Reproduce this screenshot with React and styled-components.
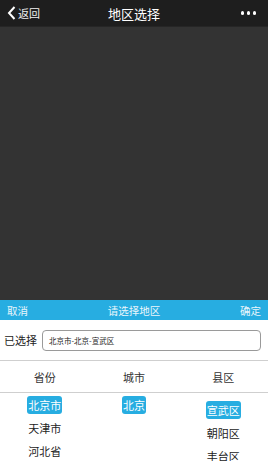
import React from "react";
import styled, { createGlobalStyle } from "styled-components";

const GlobalStyle = createGlobalStyle`
  html, body {
    margin: 0;
    padding: 0;
    background: #333;
  }
  body {
    font-family: "Noto Sans CJK SC", "Noto Sans", sans-serif;
  }
`;

const provinces = ["北京市", "天津市", "河北省"];
const cities = ["北京"];
const counties = ["宣武区", "朝阳区", "丰台区"];

const App = () => {
  return (
    <Page>
      <GlobalStyle />
      <NavBar>
        <Back>
          <svg width="9" height="14" viewBox="0 0 9 14">
            <path d="M7.5 1 L2 7 L7.5 13" fill="none" stroke="#fff" strokeWidth="2" />
          </svg>
          <span>返回</span>
        </Back>
        <Title>地区选择</Title>
        <More>
          <i />
          <i />
          <i />
        </More>
      </NavBar>
      <Mask />
      <Panel>
        <Toolbar>
          <span>取消</span>
          <span>请选择地区</span>
          <span>确定</span>
        </Toolbar>
        <SelectedRow>
          <Label>已选择</Label>
          <Field>北京市-北京-宣武区</Field>
        </SelectedRow>
        <HeadRow>
          <span>省份</span>
          <span>城市</span>
          <span>县区</span>
        </HeadRow>
        <Wheels>
          <Wheel>
            {provinces.map((p, i) => (
              <Item key={p} $active={i === 0}>
                <span>{p}</span>
              </Item>
            ))}
          </Wheel>
          <Wheel>
            {cities.map((c, i) => (
              <Item key={c} $active={i === 0}>
                <span>{c}</span>
              </Item>
            ))}
          </Wheel>
          <Wheel $offset={5}>
            {counties.map((c, i) => (
              <Item key={c} $active={i === 0}>
                <span>{c}</span>
              </Item>
            ))}
          </Wheel>
        </Wheels>
      </Panel>
    </Page>
  );
};

const Page = styled.div`
  width: 268px;
  height: 461px;
  display: flex;
  flex-direction: column;
  overflow: hidden;
`;

const NavBar = styled.div`
  height: 26px;
  background: #1e1e1e;
  display: flex;
  align-items: center;
  justify-content: space-between;
  padding: 0 12px 0 7px;
  position: relative;
  color: #fff;
  border-bottom: 1px solid #262626;
`;

const Back = styled.div`
  display: flex;
  align-items: center;
  gap: 2px;
  font-size: 11px;
  color: #f0f0f0;
`;

const Title = styled.div`
  position: absolute;
  left: 0;
  right: 0;
  text-align: center;
  font-size: 13px;
  pointer-events: none;
`;

const More = styled.div`
  display: flex;
  gap: 2.5px;
  i {
    width: 3.5px;
    height: 3.5px;
    border-radius: 50%;
    background: #fff;
  }
`;

const Mask = styled.div`
  flex: 1;
  background: #333333;
`;

const Panel = styled.div`
  background: #fff;
  height: 161px;
  display: flex;
  flex-direction: column;
`;

const Toolbar = styled.div`
  height: 20px;
  background: #27ade1;
  display: flex;
  align-items: center;
  justify-content: space-between;
  padding: 0 7px;
  font-size: 10.5px;
  color: #eaf6fc;
`;

const SelectedRow = styled.div`
  height: 41px;
  display: flex;
  align-items: center;
  gap: 5px;
  padding: 0 7px 0 4px;
  border-bottom: 1px solid #cfcfcf;
  box-sizing: border-box;
`;

const Label = styled.span`
  font-size: 11px;
  color: #222;
`;

const Field = styled.div`
  flex: 1;
  height: 21px;
  box-sizing: border-box;
  border: 1px solid #9a9a9a;
  border-radius: 4px;
  display: flex;
  align-items: center;
  padding-left: 6px;
  font-size: 7.5px;
  color: #222;
`;

const HeadRow = styled.div`
  height: 32px;
  display: grid;
  grid-template-columns: repeat(3, 1fr);
  align-items: center;
  text-align: center;
  font-size: 11px;
  color: #333;
  border-bottom: 1px solid #cfcfcf;
  box-sizing: border-box;
`;

const Wheels = styled.div`
  flex: 1;
  display: grid;
  grid-template-columns: repeat(3, 1fr);
  overflow: hidden;
`;

const Wheel = styled.div`
  padding-top: ${(p) => p.$offset || 0}px;
  display: flex;
  flex-direction: column;
`;

const Item = styled.div`
  height: 23px;
  display: flex;
  align-items: center;
  justify-content: center;
  font-size: 11px;
  color: #222;
  span {
    padding: 1px 1px;
    line-height: 16px;
    border-radius: 3px;
    background: ${(p) => (p.$active ? "#27ade1" : "transparent")};
    color: ${(p) => (p.$active ? "#fff" : "#222")};
  }
`;

export default App;
